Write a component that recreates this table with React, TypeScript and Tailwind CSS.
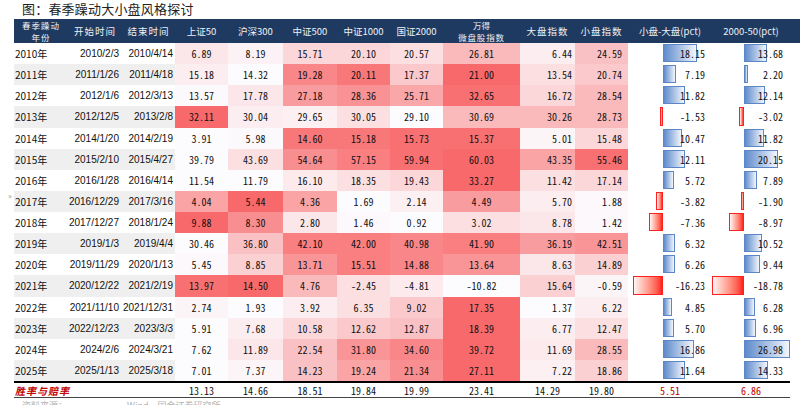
import React from "react";

type Row = {
  y: string;
  s: string;
  e: string;
  v: string[];
  t: number[];
  a: number;
  b: number;
};

const rows: Row[] = [
  { y: "2010年", s: "2010/2/3", e: "2010/4/14", v: ["6.89", "8.19", "15.71", "20.10", "20.57", "26.81", "6.44", "24.59"], t: [0.15, 0.07, 0.25, 0.25, 0.2, 0.45, 0.1, 0.4], a: 18.15, b: 13.68 },
  { y: "2011年", s: "2011/1/26", e: "2011/4/18", v: ["15.18", "14.32", "19.28", "20.11", "17.37", "21.00", "13.54", "20.74"], t: [0.1, 0, 0.8, 0.9, 0.35, 1.0, 0.2, 0.35], a: 7.19, b: 2.2 },
  { y: "2012年", s: "2012/1/6", e: "2012/3/13", v: ["13.57", "17.78", "27.18", "28.36", "25.71", "32.65", "16.72", "28.54"], t: [0.02, 0.15, 0.65, 0.72, 0.58, 0.95, 0.25, 0.45], a: 11.82, b: 12.14 },
  { y: "2013年", s: "2012/12/5", e: "2013/2/8", v: ["32.11", "30.04", "29.65", "30.05", "29.10", "30.69", "30.26", "28.73"], t: [1, 0.1, 0.08, 0.2, 0, 0.45, 0.45, 0.45], a: -1.53, b: -3.02 },
  { y: "2014年", s: "2014/1/20", e: "2014/2/19", v: ["3.91", "5.98", "14.60", "15.18", "15.73", "15.37", "5.01", "15.48"], t: [0, 0.02, 0.9, 0.9, 0.95, 0.95, 0.05, 0.25], a: 10.47, b: 11.82 },
  { y: "2015年", s: "2015/2/10", e: "2015/4/27", v: ["39.79", "43.69", "54.64", "57.15", "59.94", "60.03", "43.35", "55.46"], t: [0, 0.2, 0.75, 0.85, 0.95, 1.0, 0.6, 0.95], a: 12.11, b: 20.15 },
  { y: "2016年", s: "2016/1/28", e: "2016/4/14", v: ["11.54", "11.79", "16.10", "18.35", "19.43", "33.27", "11.42", "17.14"], t: [0, 0, 0.12, 0.2, 0.25, 1.0, 0.2, 0.25], a: 5.72, b: 7.89 },
  { y: "2017年", s: "2016/12/29", e: "2017/3/16", v: ["4.04", "5.44", "4.36", "1.69", "2.14", "4.49", "5.70", "1.88"], t: [0.6, 1.0, 0.6, 0, 0.08, 0.65, 0.1, 0.03], a: -3.82, b: -1.9 },
  { y: "2018年", s: "2017/12/27", e: "2018/1/24", v: ["9.88", "8.30", "2.80", "1.46", "0.92", "3.02", "8.78", "1.42"], t: [1.0, 0.75, 0.15, 0.03, 0, 0.2, 0.15, 0.03], a: -7.36, b: -8.97 },
  { y: "2019年", s: "2019/1/3", e: "2019/4/4", v: ["30.46", "36.80", "42.10", "42.00", "40.98", "41.90", "36.19", "42.51"], t: [0, 0.4, 0.85, 0.85, 0.8, 0.85, 0.65, 0.7], a: 6.32, b: 10.52 },
  { y: "2020年", s: "2019/11/29", e: "2020/1/13", v: ["5.45", "8.85", "13.71", "15.51", "14.88", "13.64", "8.63", "14.89"], t: [0.03, 0.3, 0.7, 0.85, 0.8, 0.7, 0.15, 0.3], a: 6.26, b: 9.44 },
  { y: "2021年", s: "2020/12/22", e: "2021/2/19", v: ["13.97", "14.50", "4.76", "-2.45", "-4.81", "-10.82", "15.64", "-0.59"], t: [0.95, 1.0, 0.45, 0.2, 0.12, 0, 0.3, 0.05], a: -16.23, b: -18.78 },
  { y: "2022年", s: "2021/11/10", e: "2021/12/31", v: ["2.74", "1.93", "3.92", "6.35", "9.02", "17.35", "1.37", "6.22"], t: [0.05, 0, 0.1, 0.2, 0.35, 1.0, 0, 0.1], a: 4.85, b: 6.28 },
  { y: "2023年", s: "2022/12/23", e: "2023/3/3", v: ["5.91", "7.68", "10.58", "12.62", "12.87", "18.39", "6.77", "12.47"], t: [0, 0.1, 0.25, 0.35, 0.4, 1.0, 0.1, 0.2], a: 5.7, b: 6.96 },
  { y: "2024年", s: "2024/2/6", e: "2024/3/21", v: ["7.62", "11.89", "22.54", "31.80", "34.60", "39.72", "11.69", "28.55"], t: [0, 0.15, 0.4, 0.7, 0.8, 1.0, 0.12, 0.45], a: 16.86, b: 26.98 },
  { y: "2025年", s: "2025/1/13", e: "2025/3/18", v: ["7.01", "7.37", "14.23", "19.24", "21.34", "27.11", "7.22", "18.86"], t: [0, 0.05, 0.4, 0.6, 0.75, 1.0, 0.08, 0.3], a: 11.64, b: 14.33 },
];

const summary = ["13.13", "14.66", "18.51", "19.84", "19.99", "23.41", "14.29", "19.80"];

const heat = (t: number) => {
  const r = Math.round(252 + (248 - 252) * t);
  const g = Math.round(252 + (105 - 252) * t);
  const b = Math.round(255 + (107 - 255) * t);
  return `rgb(${r},${g},${b})`;
};

const grid =
  "grid grid-cols-[54px_54px_53px_53px_55px_54px_53px_53px_77px_55px_53px_84px_78px]";

const numFont = "font-['Noto_Sans_Mono_CJK_SC','Noto_Sans_CJK_SC',sans-serif]";

function BarCell({ value, axis, scale }: { value: number; axis: number; scale: number }) {
  const w = Math.abs(value) * scale;
  const pos = value >= 0;
  return (
    <div className="relative h-full flex items-center justify-end pr-[7px]">
      {pos ? (
        <div
          className="absolute top-[1px] bottom-[2px] border border-[#5b87c8] bg-gradient-to-r from-[#5f8bcb] to-[#f3f6fb]"
          style={{ left: axis, width: w }}
        />
      ) : (
        <div
          className="absolute top-[1px] bottom-[2px] border border-[#ff2020] bg-gradient-to-r from-[#fff4f4] to-[#ff1a1a]"
          style={{ left: axis - w, width: w }}
        />
      )}
      <span className="relative">{value.toFixed(2)}</span>
    </div>
  );
}

export default function App() {
  return (
    <div className="w-[800px] h-[405px] overflow-hidden bg-white relative text-[#111] font-['Noto_Sans_CJK_SC',sans-serif]">
      <div className="h-[19px] pl-[22px] text-[13px] leading-[17px] text-[#222] tracking-[0.2px]">
        图：春季躁动大小盘风格探讨
      </div>
      <div className="pl-[14px]">
        {/* header */}
        <div className={`${grid} h-[24px] bg-[#1f3a60] text-[#eef1f6] text-[9.5px]`}>
          <div className="flex flex-col items-center justify-center text-[8.5px] leading-[12px] tracking-[1px]">
            <span>春季躁动</span>
            <span>年份</span>
          </div>
          <div className="flex items-center justify-center tracking-[1px]">开始时间</div>
          <div className="flex items-center justify-center tracking-[1px]">结束时间</div>
          <div className="flex items-center justify-center">上证50</div>
          <div className="flex items-center justify-center">沪深300</div>
          <div className="flex items-center justify-center">中证500</div>
          <div className="flex items-center justify-center">中证1000</div>
          <div className="flex items-center justify-center">国证2000</div>
          <div className="flex flex-col items-center justify-center text-[8.5px] leading-[12px]">
            <span>万得</span>
            <span className="tracking-[0.8px]">微盘股指数</span>
          </div>
          <div className="flex items-center justify-center tracking-[1px]">大盘指数</div>
          <div className="flex items-center justify-center tracking-[1px]">小盘指数</div>
          <div className="flex items-center justify-center">小盘-大盘(pct)</div>
          <div className="flex items-center justify-center">2000-50(pct)</div>
        </div>
        {/* body */}
        {rows.map((r, i) => (
          <div key={r.y} className={`${grid} h-[21.125px] text-[10px]`}>
            <div className={`flex items-center pl-[1px] ${i % 2 === 1 ? "bg-[#efefef]" : ""}`}>{r.y}</div>
            <div className={`flex items-center justify-end pr-[3px] font-['Liberation_Sans',sans-serif] ${i % 2 === 1 ? "bg-[#efefef]" : ""}`}>
              {r.s}
            </div>
            <div className={`flex items-center justify-end pr-[2px] font-['Liberation_Sans',sans-serif] ${i % 2 === 1 ? "bg-[#efefef]" : ""}`}>
              {r.e}
            </div>
            {r.v.map((v, j) => (
              <div
                key={j}
                className={`flex items-center ${numFont} ${j >= 6 ? (j === 6 ? "justify-end pr-[3px]" : "justify-end pr-[6px]") : "justify-center"}`}
                style={{ backgroundColor: heat(r.t[j]) }}
              >
                {v}
              </div>
            ))}
            <div className={numFont}>
              <BarCell value={r.a} axis={35} scale={1.85} />
            </div>
            <div className={numFont}>
              <BarCell value={r.b} axis={32} scale={1.7} />
            </div>
          </div>
        ))}
        {/* summary */}
        <div className={`${grid} h-[17px] border-t-2 border-b border-t-black border-b-[#444] text-[10px] w-[776px]`}>
          <div className="col-span-3 flex items-center pl-[1px] text-[#c00000] font-bold italic tracking-[1px]">
            胜率与赔率
          </div>
          {summary.map((s, j) => (
            <div key={j} className={`flex items-center justify-center ${numFont}`}>
              {s}
            </div>
          ))}
          <div className={`flex items-center justify-center text-[#c00000] ${numFont}`}>5.51</div>
          <div className={`flex items-center justify-center text-[#c00000] ${numFont}`}>6.86</div>
        </div>
        <div className="flex pt-[2px] text-[9px] text-[#b0b0b0] leading-[12px]">
          <span className="pl-[8px]">资料来源：</span>
          <span className="pl-[60px]">Wind，国金证券研究所</span>
        </div>
      </div>
      <div className="absolute left-[8px] top-[190px] text-[8px] text-[#999]">»</div>
    </div>
  );
}
